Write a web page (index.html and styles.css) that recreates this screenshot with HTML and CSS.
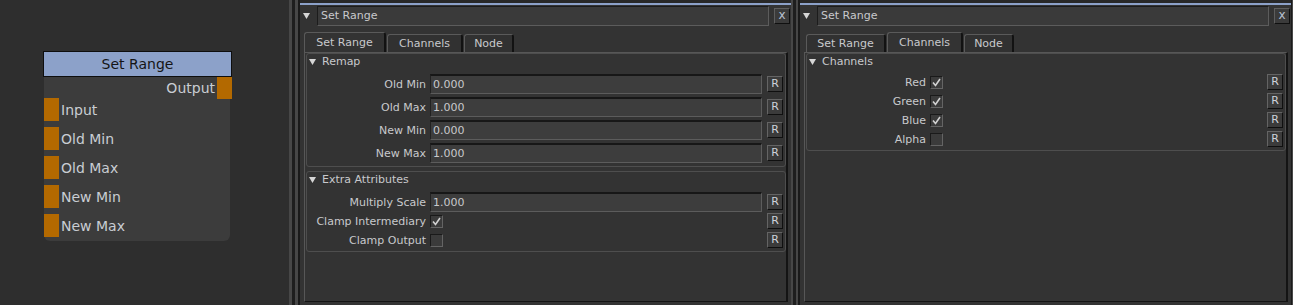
FILE: index.html
```html
<!DOCTYPE html>
<html>
<head>
<meta charset="utf-8">
<link rel="stylesheet" href="styles.css">
</head>
<body>
<div class="app">
  <div class="graph">
    <div class="node">
      <div class="node-title">Set Range</div>
      <div class="node-body">
        <div class="port-row out"><span class="port-label">Output</span><span class="port"></span></div>
        <div class="port-row in"><span class="port"></span><span class="port-label">Input</span></div>
        <div class="port-row in"><span class="port"></span><span class="port-label">Old Min</span></div>
        <div class="port-row in"><span class="port"></span><span class="port-label">Old Max</span></div>
        <div class="port-row in"><span class="port"></span><span class="port-label">New Min</span></div>
        <div class="port-row in"><span class="port"></span><span class="port-label">New Max</span></div>
      </div>
    </div>
  </div>
  <div class="splitter"></div>

  <section class="panel">
    <div class="topline"></div>
    <div class="header">
      <svg class="tri" width="7" height="6" viewBox="0 0 7 6"><polygon points="0,0 7,0 3.5,6"/></svg>
      <div class="title-box">Set Range</div>
      <div class="close">x</div>
    </div>
    <div class="tabs">
      <div class="tab active w1">Set Range</div>
      <div class="tab w2">Channels</div>
      <div class="tab w3">Node</div>
    </div>
    <div class="pane">
      <div class="group">
        <div class="group-head"><svg class="tri" width="7" height="6" viewBox="0 0 7 6"><polygon points="0,0 7,0 3.5,6"/></svg><span>Remap</span></div>
        <div class="row field-row"><span class="lbl">Old Min</span><div class="field">0.000</div><div class="rbtn">R</div></div>
        <div class="row field-row"><span class="lbl">Old Max</span><div class="field">1.000</div><div class="rbtn">R</div></div>
        <div class="row field-row"><span class="lbl">New Min</span><div class="field">0.000</div><div class="rbtn">R</div></div>
        <div class="row field-row"><span class="lbl">New Max</span><div class="field">1.000</div><div class="rbtn">R</div></div>
      </div>
      <div class="group g2">
        <div class="group-head"><svg class="tri" width="7" height="6" viewBox="0 0 7 6"><polygon points="0,0 7,0 3.5,6"/></svg><span>Extra Attributes</span></div>
        <div class="row field-row"><span class="lbl">Multiply Scale</span><div class="field">1.000</div><div class="rbtn">R</div></div>
        <div class="row check-row after-field"><span class="lbl">Clamp Intermediary</span><span class="cb"><svg width="11" height="11" viewBox="0 0 11 11"><polyline points="2,5.5 4.5,8.5 9,2"/></svg></span><div class="rbtn">R</div></div>
        <div class="row check-row"><span class="lbl">Clamp Output</span><span class="cb"></span><div class="rbtn">R</div></div>
      </div>
    </div>
  </section>
  <div class="sep"></div>

  <section class="panel">
    <div class="topline"></div>
    <div class="header">
      <svg class="tri" width="7" height="6" viewBox="0 0 7 6"><polygon points="0,0 7,0 3.5,6"/></svg>
      <div class="title-box">Set Range</div>
      <div class="close">x</div>
    </div>
    <div class="tabs">
      <div class="tab w1 first-inactive">Set Range</div>
      <div class="tab active w2">Channels</div>
      <div class="tab w3">Node</div>
    </div>
    <div class="pane">
      <div class="group">
        <div class="group-head"><svg class="tri" width="7" height="6" viewBox="0 0 7 6"><polygon points="0,0 7,0 3.5,6"/></svg><span>Channels</span></div>
        <div class="row check-row"><span class="lbl">Red</span><span class="cb"><svg width="11" height="11" viewBox="0 0 11 11"><polyline points="2,5.5 4.5,8.5 9,2"/></svg></span><div class="rbtn">R</div></div>
        <div class="row check-row"><span class="lbl">Green</span><span class="cb"><svg width="11" height="11" viewBox="0 0 11 11"><polyline points="2,5.5 4.5,8.5 9,2"/></svg></span><div class="rbtn">R</div></div>
        <div class="row check-row"><span class="lbl">Blue</span><span class="cb"><svg width="11" height="11" viewBox="0 0 11 11"><polyline points="2,5.5 4.5,8.5 9,2"/></svg></span><div class="rbtn">R</div></div>
        <div class="row check-row"><span class="lbl">Alpha</span><span class="cb"></span><div class="rbtn">R</div></div>
      </div>
    </div>
  </section>
  <div class="edge"></div>
</div>
</body>
</html>
```

FILE: styles.css
```css
html, body {
  margin: 0;
  padding: 0;
}
body {
  width: 1293px;
  height: 305px;
  overflow: hidden;
  background: #2b2b2b;
  font-family: "DejaVu Sans", Verdana, sans-serif;
  font-size: 11px;
  color: #c8c9cc;
}
.app {
  display: flex;
  height: 305px;
}

/* node graph */
.graph {
  flex: none;
  width: 289px;
  box-sizing: border-box;
  padding: 51px 0 0 43px;
  background: #2e2e2e;
}
.node {
  width: 189px;
}
.node-title {
  height: 26px;
  box-sizing: border-box;
  border: 1px solid #0e0e0e;
  background: #8ca1c9;
  color: #151515;
  font-size: 14px;
  line-height: 24px;
  text-align: center;
}
.node-body {
  margin-left: 1px;
  width: 186px;
  box-sizing: border-box;
  padding-bottom: 4px;
  background: #3c3c3c;
  border-radius: 0 0 6px 6px;
}
.port-row {
  display: flex;
  align-items: center;
  font-size: 14px;
  color: #c9cdd3;
}
.port-row.out {
  height: 21px;
  justify-content: flex-end;
}
.port-row.out .port {
  align-self: flex-start;
  height: 22px;
  margin-right: -2px;
}
.port-row.out .port-label {
  margin-right: 2px;
}
.port-row.in {
  height: 23px;
  margin-top: 6px;
}
.port-row.out + .port-row.in {
  margin-top: 0;
}
.port-row.in .port-label {
  margin-left: 2px;
}
.port {
  flex: none;
  width: 15px;
  height: 23px;
  background: #b36900;
}

/* splitters */
.splitter {
  flex: none;
  width: 11px;
  box-sizing: border-box;
  border-left: 3px solid #474747;
  border-right: 2px solid #1a1a1a;
  background: linear-gradient(to right, #1e1e1e 0 3px, #474747 3px 6px);
}
.sep {
  flex: none;
  width: 9px;
  box-sizing: border-box;
  border-left: 2px solid #474747;
  border-right: 2px solid #1a1a1a;
  background: linear-gradient(to right, #1e1e1e 0 3px, #474747 3px 5px);
}
.edge {
  flex: none;
  width: 2px;
  box-sizing: border-box;
  border-left: 1px solid #1a1a1a;
  background: #474747;
}

/* panel */
.panel {
  flex: none;
  width: 491px;
  height: 305px;
  box-sizing: border-box;
  border-top: 3px solid #282828;
  background: #333333;
}
.topline {
  height: 2px;
  background: #8ca1c9;
}
.header {
  display: flex;
  align-items: center;
  margin-top: 1px;
  height: 20px;
  padding-left: 3px;
}
.tri {
  flex: none;
  display: block;
  fill: #d6d6d6;
}
.header .tri {
  margin-right: 7px;
}
.title-box {
  flex: 1;
  height: 20px;
  box-sizing: border-box;
  border-top: 1px solid #1c1c1c;
  border-left: 1px solid #1c1c1c;
  border-right: 1px solid #5c5c5c;
  border-bottom: 1px solid #5c5c5c;
  background: #3a3a3a;
  padding-left: 3px;
  line-height: 18px;
}
.close {
  flex: none;
  width: 16px;
  height: 16px;
  box-sizing: border-box;
  margin-left: 5px;
  margin-right: 1px;
  border-top: 1px solid #5e5e5e;
  border-left: 1px solid #5e5e5e;
  border-right: 1px solid #101010;
  border-bottom: 1px solid #101010;
  background: #3b3b3b;
  color: #b9c1cf;
  text-align: center;
  line-height: 12px;
  font-size: 12px;
}

/* tabs */
.tabs {
  display: flex;
  align-items: flex-end;
  height: 20px;
  margin-top: 6px;
  padding-left: 4px;
  gap: 1px;
}
.tab {
  height: 18px;
  box-sizing: border-box;
  border-top: 1px solid #5a5a5a;
  border-left: 1px solid #5a5a5a;
  border-right: 2px solid #121212;
  border-radius: 3px 3px 0 0;
  background: #313131;
  text-align: center;
  line-height: 17px;
}
.tab.active {
  height: 20px;
  line-height: 20px;
  background: #333333;
}
.tab.w1 { width: 82px; }
.tab.w2 { width: 76px; }
.tab.w3 { width: 50px; }
.tab.first-inactive {
  width: 80px;
  margin-left: 2px;
}

/* pane */
.pane {
  height: 250px;
  box-sizing: border-box;
  margin-left: 4px;
  margin-right: 3px;
  border-top: 1px solid #575757;
  border-left: 1px solid #575757;
  border-right: 2px solid #141414;
  border-bottom: 1px solid #141414;
  padding-left: 1px;
}
.group {
  margin-top: 0;
  border: 1px solid #4e4e4e;
  border-radius: 3px;
  padding-bottom: 3px;
}
.group.g2 {
  margin-top: 4px;
}
.group-head {
  display: flex;
  align-items: center;
  height: 20px;
  padding-left: 2px;
  line-height: 16px;
}
.group-head .tri {
  margin-right: 6px;
  margin-top: -4px;
}
.group-head span {
  margin-top: -4px;
}

.row {
  display: flex;
  align-items: center;
  margin-top: 3px;
}
.group-head + .row {
  margin-top: 0;
}
.row.after-field {
  margin-top: 1px;
}
.field-row {
  height: 20px;
}
.check-row {
  height: 16px;
}
.lbl {
  flex: none;
  width: 119px;
  margin-right: 4px;
  text-align: right;
  white-space: nowrap;
}
.field {
  flex: 1;
  height: 20px;
  box-sizing: border-box;
  border-top: 2px solid #171717;
  border-left: 1px solid #222222;
  border-right: 1px solid #5c5c5c;
  border-bottom: 1px solid #5c5c5c;
  background: #3d3d3d;
  padding-left: 2px;
  line-height: 17px;
}
.rbtn {
  flex: none;
  width: 16px;
  height: 16px;
  box-sizing: border-box;
  margin-left: 5px;
  margin-right: 2px;
  border-top: 1px solid #646464;
  border-left: 1px solid #646464;
  border-right: 1px solid #0f0f0f;
  border-bottom: 1px solid #0f0f0f;
  background: #3b3b3b;
  text-align: center;
  line-height: 14px;
  font-size: 11px;
  color: #cdd2da;
}
.check-row .rbtn {
  margin-left: auto;
}
.cb {
  flex: none;
  width: 13px;
  height: 13px;
  box-sizing: border-box;
  border-top: 1px solid #1a1a1a;
  border-left: 1px solid #1a1a1a;
  border-right: 1px solid #646464;
  border-bottom: 1px solid #646464;
  background: #3b3b3b;
}
.cb svg {
  display: block;
  fill: none;
  stroke: #d2d2d2;
  stroke-width: 1.6;
}
```
